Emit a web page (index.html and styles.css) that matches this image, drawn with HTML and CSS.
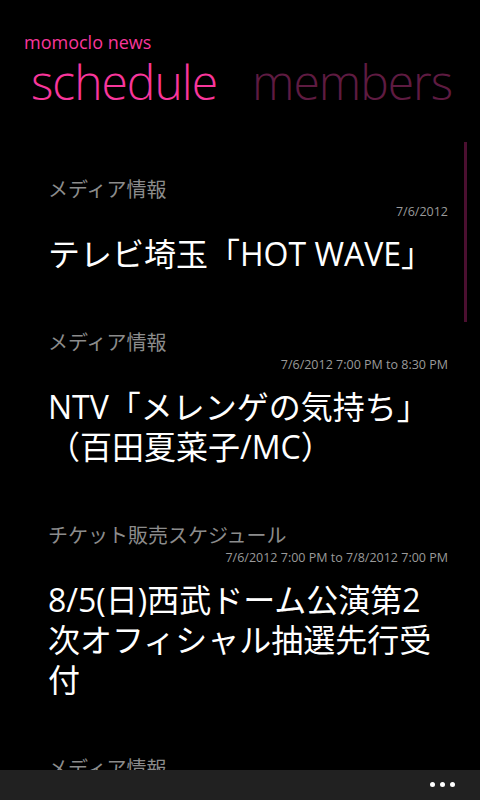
FILE: index.html
```html
<!DOCTYPE html>
<html lang="ja">
<head>
<meta charset="utf-8">
<title>momoclo news</title>
<link rel="stylesheet" href="styles.css">
</head>
<body>
<div class="phone">
  <header class="titlebar">
    <div class="app-title">momoclo news</div>
    <nav class="pivot">
      <span class="pivot-item active">schedule</span>
      <span class="pivot-item">members</span>
    </nav>
  </header>

  <main class="list">
    <article class="item">
      <div class="cat">メディア情報</div>
      <div class="date">7/6/2012</div>
      <h2 class="title">テレビ埼玉「HOT WAVE」</h2>
    </article>
    <article class="item">
      <div class="cat">メディア情報</div>
      <div class="date">7/6/2012 7:00 PM to 8:30 PM</div>
      <h2 class="title">NTV「メレンゲの気持ち」（百田夏菜子/MC）</h2>
    </article>
    <article class="item">
      <div class="cat">チケット販売スケジュール</div>
      <div class="date">7/6/2012 7:00 PM to 7/8/2012 7:00 PM</div>
      <h2 class="title">8/5(日)西武ドーム公演第2次オフィシャル抽選先行受付</h2>
    </article>
    <article class="item">
      <div class="cat">メディア情報</div>
      <div class="date">7/7/2012</div>
      <h2 class="title">&nbsp;</h2>
    </article>
  </main>

  <div class="scroll-indicator"></div>

  <footer class="appbar">
    <span class="dots"><i></i><i></i><i></i></span>
  </footer>
</div>
</body>
</html>
```

FILE: styles.css
```css
html, body {
  margin: 0;
  padding: 0;
  background: #000;
  height: 100%;
  overflow: hidden;
}

.phone {
  position: relative;
  width: 480px;
  height: 800px;
  overflow: hidden;
  background: #000;
  font-family: "Open Sans", "Noto Sans CJK JP", sans-serif;
  color: #fff;
}

.titlebar {
  padding: 31px 0 0 24px;
}

.app-title {
  font-size: 18px;
  line-height: 22px;
  color: #f8369b;
}

.pivot {
  display: flex;
  gap: 35px;
  margin: 0 0 0 7px;
  font-size: 48px;
  font-weight: 300;
  line-height: 58px;
  letter-spacing: -1px;
  white-space: nowrap;
}

.pivot-item {
  color: #5e1b41;
}

.pivot-item.active {
  color: #f8369b;
}

.list {
  padding: 66px 32px 0 48px;
}

.item {
  margin-bottom: 56px;
}

.cat {
  font-size: 20px;
  line-height: 26px;
  color: #8c8c8c;
}

.date {
  font-size: 12.5px;
  line-height: 17px;
  color: #9a9a9a;
  text-align: right;
}

.title {
  margin: 14px 0 0;
  font-size: 32px;
  font-weight: 400;
  line-height: 40px;
  color: #fff;
}

.scroll-indicator {
  position: absolute;
  left: 464px;
  top: 142px;
  width: 3px;
  height: 180px;
  background: #4b0f30;
}

.appbar {
  position: absolute;
  left: 0;
  right: 0;
  bottom: 0;
  height: 30px;
  background: #212121;
  display: flex;
  justify-content: flex-end;
  align-items: flex-start;
  padding: 12px 25px 0 0;
  box-sizing: border-box;
}

.dots {
  display: flex;
  gap: 5px;
}

.dots i {
  display: block;
  width: 5px;
  height: 5px;
  border-radius: 50%;
  background: #fff;
}
```
